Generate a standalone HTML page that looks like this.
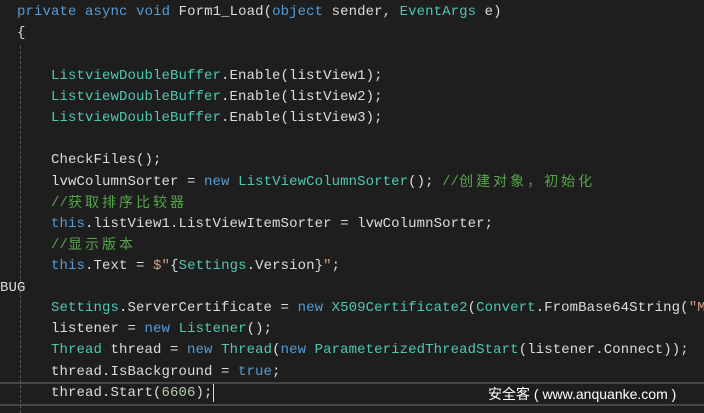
<!DOCTYPE html>
<html><head><meta charset="utf-8"><style>
html,body{margin:0;padding:0;background:#1e1e1e;width:704px;height:413px;overflow:hidden}
pre{margin:0;position:absolute;left:17px;top:2px;font-family:"Liberation Mono","Noto Sans CJK SC",monospace;font-size:14px;line-height:21.2px;color:#dcdcdc;letter-spacing:0.1px;white-space:pre}
.k{color:#569cd6}.t{color:#4ec9b0}.c{color:#57a64a}.s{color:#d69d85}.n{color:#b5cea8}
.z{font-family:"Noto Sans CJK SC",sans-serif;letter-spacing:3px;font-size:14px;line-height:14px;display:inline-block;height:14px;vertical-align:-1px}
.guide{position:absolute;left:20px;top:46px;height:367px;border-left:1px dashed #5a5a5a}
.cur{position:absolute;left:0;top:382px;width:704px;height:20px;border-top:2px solid #464646;border-bottom:2px solid #464646}
.wm{position:absolute;left:488px;top:384px;color:#fff;font-family:"Liberation Sans","Noto Sans CJK SC",sans-serif;font-size:14px}
.caret{position:absolute;left:213px;top:384px;width:1px;height:18px;background:#dcdcdc}
</style></head><body>
<div class="cur"></div>
<div class="guide"></div>
<pre><span class="k">private</span> <span class="k">async</span> <span class="k">void</span> Form1_Load(<span class="k">object</span> sender, <span class="t">EventArgs</span> e)
{

    <span class="t">ListviewDoubleBuffer</span>.Enable(listView1);
    <span class="t">ListviewDoubleBuffer</span>.Enable(listView2);
    <span class="t">ListviewDoubleBuffer</span>.Enable(listView3);

    CheckFiles();
    lvwColumnSorter = <span class="k">new</span> <span class="t">ListViewColumnSorter</span>(); <span class="c">//<span class="z">创建对象，初始化</span></span>
    <span class="c">//<span class="z">获取排序比较器</span></span>
    <span class="k">this</span>.listView1.ListViewItemSorter = lvwColumnSorter;
    <span class="c">//<span class="z">显示版本</span></span>
    <span class="k">this</span>.Text = <span class="s">$"</span>{<span class="t">Settings</span>.Version}<span class="s">"</span>;
</pre>
<pre style="left:0;top:278px">BUG</pre>
<pre style="top:298px">    <span class="t">Settings</span>.ServerCertificate = <span class="k">new</span> <span class="t">X509Certificate2</span>(<span class="t">Convert</span>.FromBase64String(<span class="s">"M</span>
    listener = <span class="k">new</span> <span class="t">Listener</span>();
    <span class="t">Thread</span> thread = <span class="k">new</span> <span class="t">Thread</span>(<span class="k">new</span> <span class="t">ParameterizedThreadStart</span>(listener.Connect));
    thread.IsBackground = <span class="k">true</span>;
    thread.Start(<span class="n">6606</span>);</pre>
<div class="caret"></div>
<div class="wm">安全客 ( www.anquanke.com )</div>
</body></html>
